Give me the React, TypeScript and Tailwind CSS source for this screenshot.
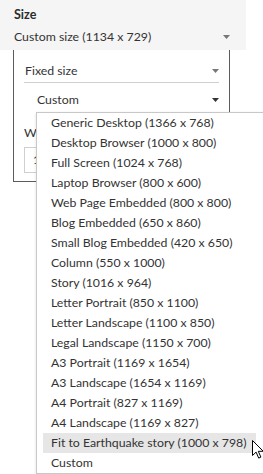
import { Fragment } from 'react';

const sizes = [
  'Generic Desktop (1366 x 768)',
  'Desktop Browser (1000 x 800)',
  'Full Screen (1024 x 768)',
  'Laptop Browser (800 x 600)',
  'Web Page Embedded (800 x 800)',
  'Blog Embedded (650 x 860)',
  'Small Blog Embedded (420 x 650)',
  'Column (550 x 1000)',
  'Story (1016 x 964)',
  'Letter Portrait (850 x 1100)',
  'Letter Landscape (1100 x 850)',
  'Legal Landscape (1150 x 700)',
  'A3 Portrait (1169 x 1654)',
  'A3 Landscape (1654 x 1169)',
  'A4 Portrait (827 x 1169)',
  'A4 Landscape (1169 x 827)',
  'Fit to Earthquake story (1000 x 798)',
  'Custom',
];

function Caret({ dark }: { dark?: boolean }) {
  return (
    <svg width="7" height="4" viewBox="0 0 7 4" className="shrink-0">
      <path d="M0 0h7L3.5 4z" fill={dark ? '#333333' : '#777777'} />
    </svg>
  );
}

export default function App() {
  return (
    <div className="relative w-[263px] h-[474px] bg-white overflow-hidden font-['Lato','Noto_Sans',sans-serif] text-[12.3px] text-[#333333]">
      <div className="w-[246px] h-[50px] bg-[#f5f5f5] pl-[14px] pr-[16px] pt-[6px]">
        <div className="font-bold text-[12.5px] leading-[18px] text-[#2b2b2b]">Size</div>
        <div className="flex items-center justify-between h-[26px]">
          <span>Custom size (1134 x 729)</span>
          <Caret />
        </div>
      </div>

      <div className="ml-[13px] w-[217px] h-[132px] border-x border-b border-[#5c5c5c] px-[10px]">
        <div className="flex items-center justify-between h-[33px] pl-[1px] border-b border-[#cfcfcf] pt-[10px]">
          <span>Fixed size</span>
          <Caret />
        </div>
        <div className="flex items-center justify-between h-[34px] pl-[13px]">
          <span>Custom</span>
          <Caret dark />
        </div>
        <div className="h-[30px] pt-[6px] leading-[20px]">W</div>
        <div className="w-[60px] h-[26px] border border-[#cfcfcf] pl-[8px] leading-[24px]">1</div>
      </div>

      {/* dropdown menu */}
      <div className="absolute left-[36px] top-[112px] w-[230px] h-[362px] bg-white border border-[#c8c8c8] shadow-[0_1px_3px_rgba(0,0,0,0.12)] pl-[6px]">
        {sizes.map((s, i) => (
          <Fragment key={s}>
            <div
              className={`h-[20px] leading-[20px] pl-[8px] w-[213px] whitespace-nowrap ${
                i === 16 ? 'bg-[#e6e6e6]' : ''
              }`}
            >
              {s}
            </div>
          </Fragment>
        ))}
      </div>

      {/* mouse pointer */}
      <svg
        className="absolute left-[252px] top-[440px]"
        width="12"
        height="19"
        viewBox="0 0 12 19"
      >
        <path
          d="M0.5 0.5v15l3.6-3.4 2.6 6 2.2-1-2.6-5.8h5z"
          fill="#ffffff"
          stroke="#000000"
          strokeWidth="1"
          strokeLinejoin="miter"
        />
      </svg>
    </div>
  );
}
